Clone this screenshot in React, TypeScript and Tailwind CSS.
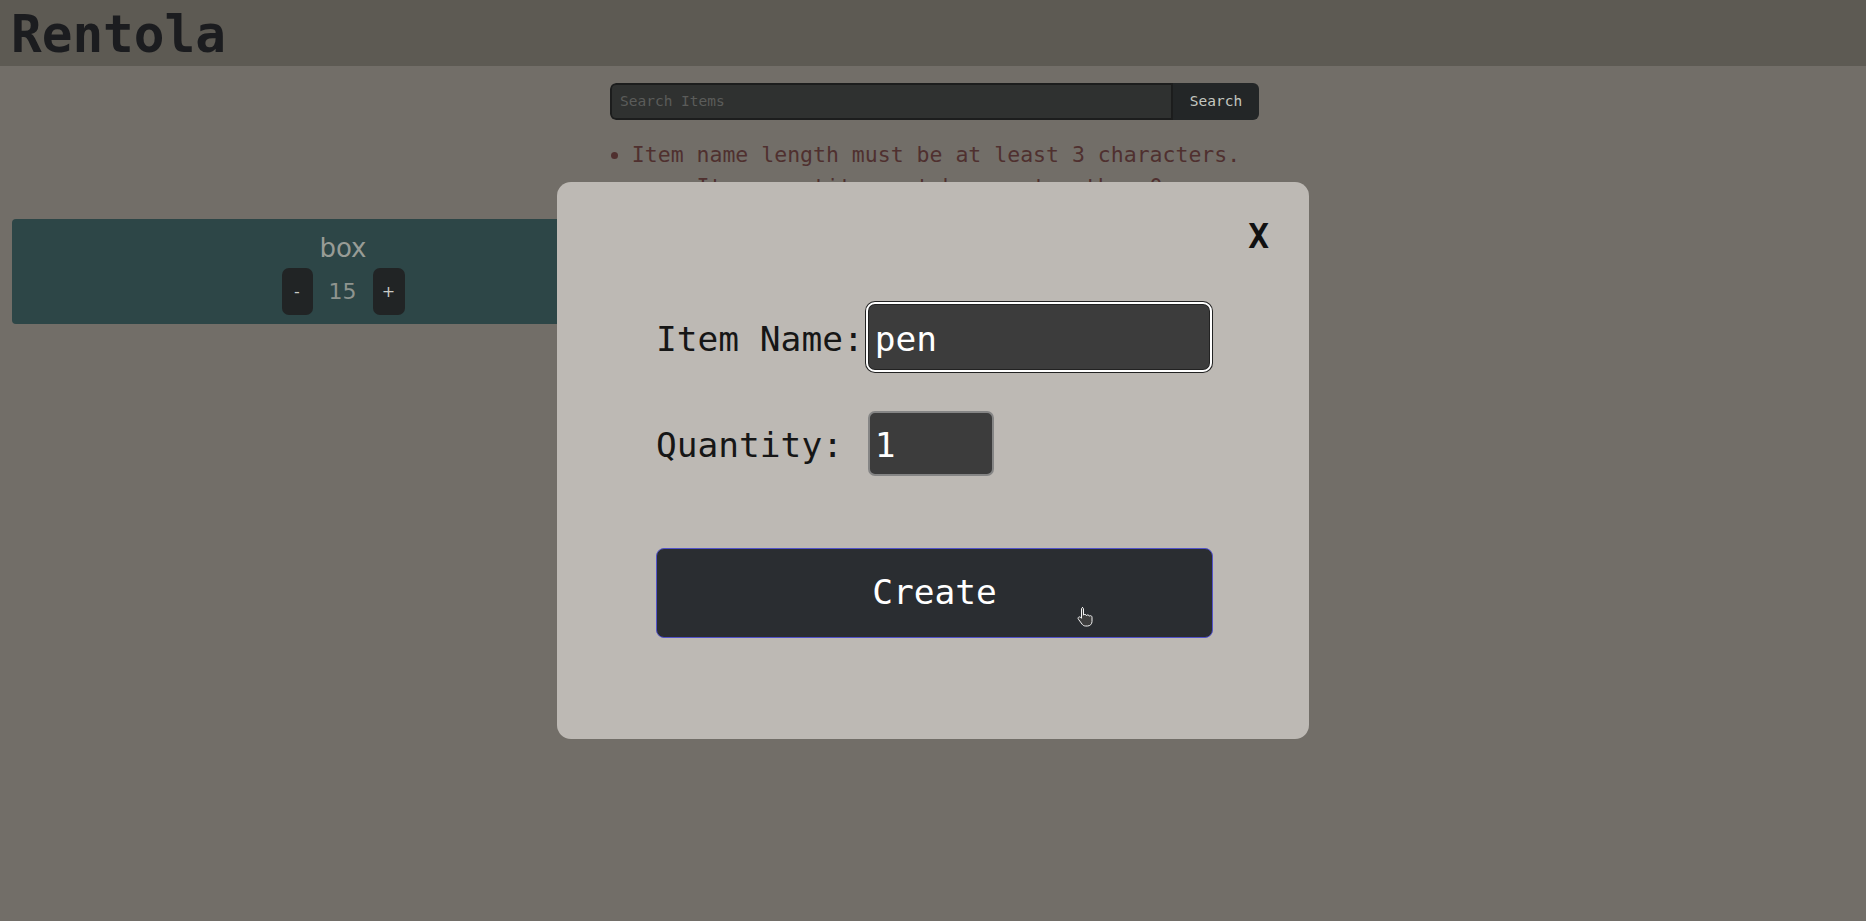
import React from 'react';

const mono = "font-['DejaVu_Sans_Mono',monospace]";
const sans = "font-['DejaVu_Sans',sans-serif]";

const HandCursor: React.FC = () => (
  <svg width="20" height="22" viewBox="0 0 20 22" className="absolute left-[419px] top-[57px]">
    <path
      d="M6 1.5c.9 0 1.5.6 1.5 1.5v6.2c.3-.5.8-.8 1.4-.8.8 0 1.4.5 1.5 1.2.3-.4.8-.7 1.4-.7.8 0 1.4.6 1.5 1.3.3-.3.7-.5 1.2-.5.9 0 1.5.7 1.5 1.6v4.2c0 2.6-2 4.5-4.5 4.5H9.6c-1.4 0-2.6-.6-3.4-1.7L2.4 13.2c-.5-.7-.4-1.6.3-2.1.6-.4 1.4-.3 1.9.2l.9 1V3c0-.9.6-1.5 1.5-1.5z"
      fill="#3d3d3d"
      stroke="#f2f2f2"
      strokeWidth="1"
    />
  </svg>
);

const ItemCard: React.FC<{ name: string; qty: number }> = ({ name, qty }) => (
  <div className={`w-[662px] rounded-[4px] bg-[#2d4647] pt-[14px] pb-[9px] flex flex-col items-center ${sans}`}>
    <div className="text-[26px] leading-[30px] text-[#989c96]">{name}</div>
    <div className="mt-[5px] flex items-center gap-4">
      <button className="w-[31px] h-[47px] rounded-[7px] bg-[#212425] text-[16px] text-[#c9cbc6] flex items-center justify-center">
        -
      </button>
      <span className="text-[22px] text-[#8e948f]">{qty}</span>
      <button className="w-[32px] h-[47px] rounded-[7px] bg-[#212425] text-[16px] text-[#c9cbc6] flex items-center justify-center">
        +
      </button>
    </div>
  </div>
);

export default function App() {
  return (
    <div className={`min-h-[921px] bg-[#726e68] ${mono}`}>
      <header className="h-[66px] bg-[#5d5a53] pl-[11px] pt-[5px]">
        <h1 className="text-[51px] leading-[59px] font-bold text-[#1b1c1f]">Rentola</h1>
      </header>

      <div className="pl-[610px] pt-[17px]">
        <div className="w-[649px] flex h-[37px] rounded-[6px] overflow-hidden">
          <input
            placeholder="Search Items"
            className="flex-1 bg-[#2f3130] border-2 border-[#1c1d1d] rounded-l-[6px] pl-[8px] text-[14.5px] text-[#c4c6c0] placeholder:text-[#5b5c5a] outline-none"
          />
          <button className="w-[86px] bg-[#232627] text-[14.5px] text-[#c4c6c0]">Search</button>
        </div>
        <ul className="ml-[21px] mt-[19px] w-[610px] list-disc list-outside text-center text-[21.5px] leading-[32px] text-[#4f302f] whitespace-nowrap">
          <li>Item name length must be at least 3 characters.</li>
          <li>Item quantity must be greater than 0.</li>
        </ul>
      </div>

      <div className="px-[12px] mt-[16px] flex">
        <ItemCard name="box" qty={15} />
      </div>

      <div className="fixed inset-0 flex items-center justify-center">
        <div className="w-[752px] h-[557px] rounded-[14px] bg-[#bdb9b4] pt-[34px] pr-[40px] flex flex-col">
          <div className="flex justify-end">
            <button className="text-[34.5px] leading-[40px] font-bold text-[#111111]">X</button>
          </div>
          <div className="w-[557px] ml-[99px] mt-[48px]">
            <div className="grid grid-cols-[auto_auto] justify-start items-baseline gap-x-[4px] gap-y-[41px] text-[34.5px] text-[#161616]">
              <label>Item Name:</label>
              <input
                defaultValue="pen"
                className="w-[342px] h-[66px] rounded-[7px] bg-[#3c3c3c] border border-[#222222] outline-2 outline-solid outline-white shadow-[0_0_0_3px_#222222] pl-[6px] pt-[3px] text-[34.5px] text-white"
              />
              <label>Quantity:</label>
              <input
                defaultValue="1"
                className="w-[126px] h-[65px] rounded-[7px] bg-[#3c3c3c] border-2 border-[#858585] pl-[5px] pt-[2px] text-[34.5px] text-white outline-none"
              />
            </div>
            <button className="relative mt-[72px] w-[557px] h-[90px] rounded-[8px] bg-[#2a2d31] border border-[#5252c8] text-[34.5px] text-white">
              Create
              <HandCursor />
            </button>
          </div>
        </div>
      </div>
    </div>
  );
}
